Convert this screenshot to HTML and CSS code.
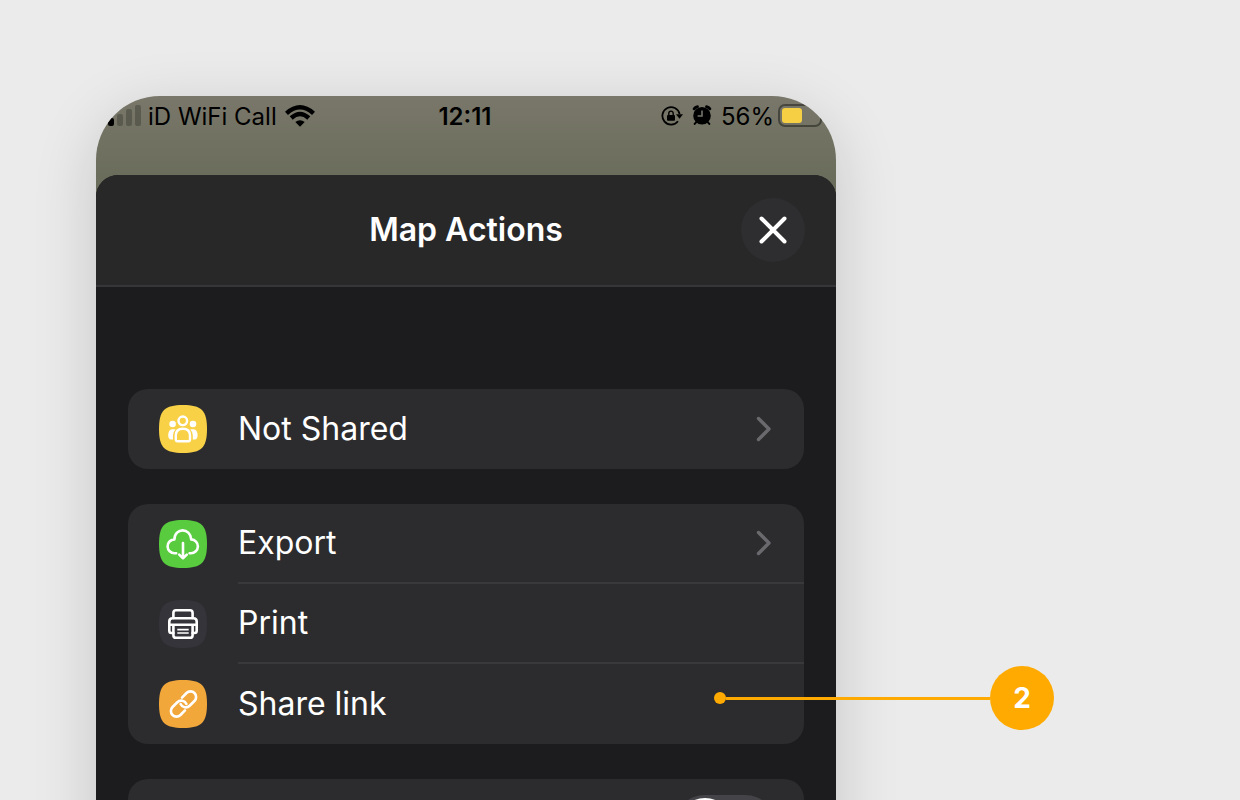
FILE: index.html
```html
<!DOCTYPE html>
<html lang="en">
<head>
<meta charset="utf-8">
<title>Map Actions</title>
<link rel="stylesheet" href="styles.css">
</head>
<body>
<main class="stage">
  <div class="phone">
    <header class="status">
      <div class="network">
        <svg class="signal" viewBox="0 0 34 22" aria-hidden="true">
          <rect x="0" y="13" width="6" height="8" rx="2"/>
          <g opacity=".22"><rect x="9" y="9" width="6" height="12" rx="2"/><rect x="18" y="4" width="6" height="17" rx="2"/><rect x="27" y="0" width="6" height="21" rx="2"/></g>
        </svg>
        <span class="carrier">iD WiFi Call</span>
        <svg class="wifi" viewBox="0 0 30 22" aria-hidden="true">
          <g fill="none" stroke="#000" stroke-width="4.4"><path d="M1.5 8.3Q15-3.7 28.5 8.3"/><path d="M6.2 13Q15 5 23.8 13"/></g>
          <path d="M10.3 17.1Q15 13.3 19.7 17.1L15 21.8Z"/>
        </svg>
      </div>
      <time class="clock">12:11</time>
      <div class="indicators">
        <svg class="lock" viewBox="0 0 22 20" aria-hidden="true">
          <path d="M18.6 8A8.7 8.7 0 1 0 17 15.2" fill="none" stroke="#000" stroke-width="1.8"/>
          <path d="M15 8.2H22L18.5 12.8Z"/>
          <rect x="6" y="9" width="8" height="5.8" rx="1"/>
          <path d="M7.8 9V7.3a2.2 2.2 0 0 1 4.4 0V9" fill="none" stroke="#000" stroke-width="1.4"/>
        </svg>
        <svg class="alarm" viewBox="0 0 20 20" aria-hidden="true">
          <circle cx="10" cy="10.8" r="8.8"/>
          <g fill="none" stroke="#000" stroke-linecap="round"><path d="M2.2 3.8Q3.3 2 5.4 1.7M17.8 3.8Q16.7 2 14.6 1.7" stroke-width="3"/><path d="M4.5 16.8L2.7 18.9M15.5 16.8L17.3 18.9" stroke-width="2"/></g>
          <path d="M10 5.4V11H5.6" fill="none" stroke="#77766a" stroke-width="1.6"/>
        </svg>
        <span class="percent">56%</span>
        <svg class="battery" viewBox="0 0 44 24" aria-hidden="true">
          <rect x="1" y="1" width="42" height="21" rx="6" fill="none" stroke="#000" stroke-opacity=".4" stroke-width="2"/>
          <rect x="4" y="4" width="20" height="15" rx="3" fill="#f6cf45"/>
        </svg>
      </div>
    </header>
    <section class="sheet">
      <header class="sheet-head">
        <h1 class="title">Map Actions</h1>
        <button class="close" type="button" aria-label="Close">
          <svg viewBox="0 0 28 28"><path d="M2.5 2.5L25.5 25.5M25.5 2.5L2.5 25.5" fill="none" stroke="#fff" stroke-width="4" stroke-linecap="round"/></svg>
        </button>
      </header>
      <div class="sheet-body">
        <div class="card">
          <button class="row" type="button">
            <svg class="icon" viewBox="0 0 48 48">
              <path class="tile yellow" d="M24 0C42.5 0 48 5.5 48 24S42.5 48 24 48 0 42.5 0 24 5.5 0 24 0Z"/>
              <g fill="#fff"><circle cx="13.6" cy="19" r="3.3"/><circle cx="34" cy="19" r="3.3"/>
              <path d="M14.8 24.2H13Q9.2 24.8 9.2 30.3Q9.2 34.2 12 34.6H14V30.5Q14 26.5 16.6 24.4ZM32.8 24.2H34.6Q38.6 24.8 38.6 30.3Q38.6 34.2 35.8 34.6H33.8V30.5Q33.8 26.5 31.2 24.4Z"/></g>
              <g fill="none" stroke="#fff" stroke-width="2.4"><circle cx="23.8" cy="15.8" r="4.3"/><path d="M18.6 36.3Q16.8 36.3 16.8 34.5V30.5Q16.8 23.7 23.9 23.7T31 30.5V34.5Q31 36.3 29.2 36.3Z"/></g>
            </svg>
            <span class="label">Not Shared<svg class="chevron" viewBox="0 0 16 26"><path d="M2.5 2.5L13 13L2.5 23.5"/></svg></span>
          </button>
        </div>
        <div class="card">
          <div class="item">
            <button class="row" type="button">
              <svg class="icon" viewBox="0 0 48 48">
                <path class="tile green" d="M24 0C42.5 0 48 5.5 48 24S42.5 48 24 48 0 42.5 0 24 5.5 0 24 0Z"/>
                <g class="line"><path d="M17.2 33.2H15.6A6.8 6.8 0 0 1 15.4 19.4C15.7 7.3 31.5 7.3 32.2 19.4A6.8 6.8 0 0 1 31.8 33.2H30.6"/><path d="M24 23V38M20.2 34.6L24 38.2L27.8 34.6"/></g>
              </svg>
              <span class="label">Export<svg class="chevron" viewBox="0 0 16 26"><path d="M2.5 2.5L13 13L2.5 23.5"/></svg></span>
            </button>
          </div>
          <div class="item">
            <button class="row" type="button">
              <svg class="icon" viewBox="0 0 48 48">
                <path class="tile slate" d="M24 0C42.5 0 48 5.5 48 24S42.5 48 24 48 0 42.5 0 24 5.5 0 24 0Z"/>
                <g class="line"><path d="M14.4 18V13Q14.4 10.3 17 10.3H31Q33.6 10.3 33.6 13V18"/><path d="M14.4 33H12.5Q10.3 33 10.3 30.8V21.5Q10.3 18.2 13.6 18.2H34.4Q37.7 18.2 37.7 21.5V30.8Q37.7 33 35.5 33H33.6"/><path d="M10.5 24.8H37.5M14.4 25V35.2Q14.4 37.8 17 37.8H31Q33.6 37.8 33.6 35.2V25"/></g>
                <path d="M18.3 29.6H29.7M18.3 33H29.7" stroke="#fff" stroke-width="1.6"/>
              </svg>
              <span class="label">Print</span>
            </button>
          </div>
          <div class="item">
            <button class="row" type="button">
              <svg class="icon" viewBox="0 0 48 48">
                <path class="tile orange" d="M24 0C42.5 0 48 5.5 48 24S42.5 48 24 48 0 42.5 0 24 5.5 0 24 0Z"/>
                <g class="line" transform="rotate(-45 24.5 24)"><path d="M21 29.6H14.6A5.6 5.6 0 0 1 14.6 18.4H21.4A5.6 5.6 0 0 1 26.6 26"/><path d="M28 18.4H34.4A5.6 5.6 0 0 1 34.4 29.6H27.6A5.6 5.6 0 0 1 22.4 22"/></g>
              </svg>
              <span class="label">Share link</span>
            </button>
            <div class="callout"><span class="dot"></span><span class="leader"></span><span class="number">2</span></div>
          </div>
        </div>
        <div class="card toggle-row">
          <input class="toggle" type="checkbox" role="switch" aria-label="Option">
        </div>
      </div>
    </section>
  </div>
</main>
</body>
</html>
```
FILE: styles.css
```css
* { box-sizing: border-box; }

body {
  margin: 0;
  background: #ebebeb;
  color: #fff;
  font-family: Inter, "Liberation Sans", sans-serif;
}

button {
  border: 0;
  padding: 0;
  background: none;
  color: inherit;
  font: inherit;
  text-align: left;
}

svg { display: block; flex: none; }

.stage {
  display: flex;
  height: 100vh;
  padding: 96px 96px 0;
  overflow: hidden;
}

.phone {
  flex: 0 1 740px;
  align-self: flex-start;
  border-radius: 64px 64px 0 0;
  background: linear-gradient(#79776a, #6b6d5c 80px);
  box-shadow: 0 16px 64px rgba(0, 0, 0, .16);
}

.status {
  display: grid;
  grid-template-columns: 1fr auto 1fr;
  height: 79px;
  padding: 8px 14px 0 12px;
  border-radius: 64px 64px 0 0;
  overflow: hidden;
  color: #000;
  font-size: 24px;
  line-height: 26px;
}

.network, .indicators { display: flex; align-items: flex-start; }
.indicators { justify-content: flex-end; }
.signal { width: 34px; height: 22px; margin-top: 1px; }
.carrier { margin-left: 6px; white-space: nowrap; }
.wifi { width: 30px; height: 22px; margin: 1px 0 0 8px; }
.clock { font-weight: 600; }
.lock { width: 22px; height: 20px; margin: 2px 9px 0 0; }
.alarm { width: 20px; height: 20px; margin: 1px 9px 0 0; }
.battery { width: 44px; height: 24px; margin-left: 4px; }

.sheet {
  border-radius: 22px 22px 0 0;
  background: #1c1c1e;
}

.sheet-head {
  display: grid;
  grid-template-columns: 64px 1fr 64px;
  align-items: center;
  height: 112px;
  padding: 0 31px;
  border-bottom: 2px solid #363638;
  border-radius: 22px 22px 0 0;
  background: #282829;
}

.title {
  grid-column: 2;
  margin: 0;
  font-size: 32px;
  font-weight: 600;
  line-height: 40px;
  text-align: center;
}

.close {
  display: grid;
  place-items: center;
  width: 64px;
  height: 64px;
  border-radius: 50%;
  background: #2e2e30;
}

.close svg { width: 28px; height: 28px; }

.sheet-body {
  display: flex;
  flex-direction: column;
  gap: 35px;
  padding: 102px 32px 32px;
}

.card {
  border-radius: 20px;
  background: #2c2c2e;
}

.row {
  display: flex;
  align-items: center;
  width: 100%;
  height: 80px;
  padding-left: 31px;
  font-size: 32px;
  line-height: 40px;
}

.icon { width: 48px; height: 48px; }
.yellow { fill: #f8d147; }
.green { fill: #58cc3e; }
.slate { fill: #35343b; }
.orange { fill: #f2a73b; }
.line { fill: none; stroke: #fff; stroke-width: 2.6; stroke-linecap: round; stroke-linejoin: round; }

.label {
  display: flex;
  flex: 1;
  align-items: center;
  justify-content: space-between;
  height: 80px;
  margin-left: 31px;
  padding-right: 32px;
}

.item { position: relative; }
.item:not(:last-child) .label { border-bottom: 2px solid #39393b; }

.chevron { width: 16px; height: 26px; }
.chevron path { fill: none; stroke: #6a6a6e; stroke-width: 3.4; stroke-linecap: round; stroke-linejoin: round; }

/* Annotation that runs from the row out to the right of the phone. */
.callout {
  position: absolute;
  top: 2px;
  left: calc(100% - 90px);
  display: flex;
  align-items: center;
  width: 340px;
}

.dot { width: 12px; height: 12px; border-radius: 50%; background: #ffaa00; }
.leader { flex: 1; height: 3px; background: #ffaa00; }

.number {
  width: 64px;
  height: 64px;
  border-radius: 50%;
  background: #ffaa00;
  font-size: 28px;
  font-weight: 700;
  line-height: 64px;
  text-align: center;
}

.toggle-row {
  display: flex;
  justify-content: flex-end;
  padding: 16px 28px;
}

.toggle {
  appearance: none;
  width: 102px;
  height: 62px;
  margin: 0;
  padding: 3px;
  border-radius: 31px;
  background: #444448;
}

.toggle::before {
  content: "";
  display: block;
  width: 56px;
  height: 56px;
  border-radius: 50%;
  background: #fff;
}
```
